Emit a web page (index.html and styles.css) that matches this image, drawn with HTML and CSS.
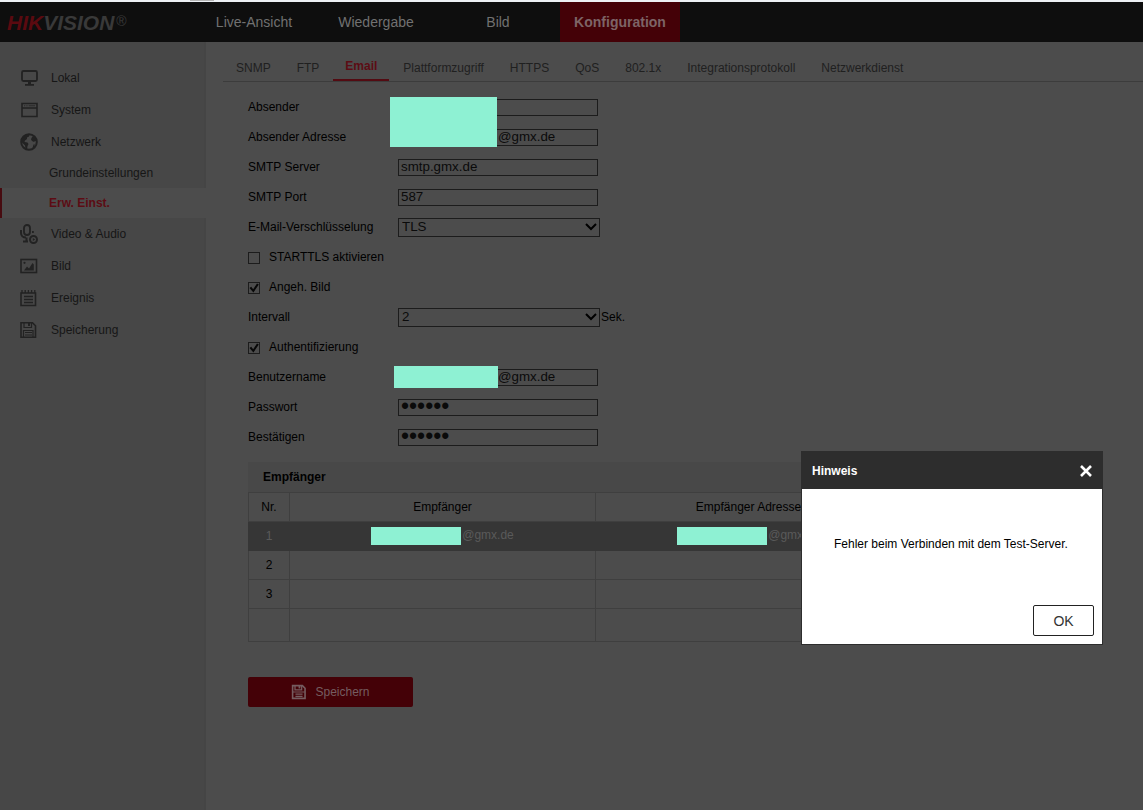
FILE: index.html
```html
<!DOCTYPE html>
<html lang="de">
<head>
<meta charset="utf-8">
<title>Konfiguration</title>
<link rel="stylesheet" href="styles.css">
</head>
<body>
<div class="strip"><span class="strip-tab"></span></div>
<header class="header">
  <div class="logo"><span class="logo-red">HIK</span>VISION<span class="reg">®</span></div>
  <nav class="nav">
    <a href="#">Live-Ansicht</a>
    <a href="#">Wiedergabe</a>
    <a href="#">Bild</a>
    <a href="#" class="active">Konfiguration</a>
  </nav>
</header>
<div class="layout">
  <nav class="sidebar">
    <a href="#" class="item"><svg class="icon" viewBox="0 0 18 18"><rect x="2" y="2" width="15" height="10" rx="1.5" fill="none" stroke="currentColor" stroke-width="1.8"/><path d="M8 12h3v3h3v1.700H5V15h3z" fill="currentColor"/></svg>Lokal</a>
    <a href="#" class="item"><svg class="icon" viewBox="0 0 18 18"><path d="M2 2.500h15v13H2zM2 7h15" fill="none" stroke="currentColor" stroke-width="1.600"/><path d="M4 4.800h1.300M6.300 4.800h1.300M8.600 4.800h6.500" stroke="currentColor" stroke-width=".8"/></svg>System</a>
    <a href="#" class="item"><svg class="icon" viewBox="0 0 18 18"><circle cx="9" cy="9" r="7.800" fill="none" stroke="currentColor" stroke-width="2"/><path d="M2 6C3 3 6 1 9.500 1.500L9 3.500 7 4.500 7 6 5 7.500 4.500 9 7.500 9.500 8.500 11 7.500 13 7 16.500 5.500 15.500 5 12.500 2 9.500zM12.500 3.500L15 4l2 4h-2l-1 1-2-1-1-1.500.5-1.500zM13.500 11.500l1.500 0-1 2.500-1.500 1z" fill="currentColor"/></svg>Netzwerk</a>
    <a href="#" class="sub">Grundeinstellungen</a>
    <a href="#" class="sub current">Erw. Einst.</a>
    <a href="#" class="item"><svg class="icon tall" viewBox="0 0 18 20"><rect x="4" y="1" width="6" height="10" rx="3" fill="none" stroke="currentColor" stroke-width="1.800"/><path d="M1 6v3c0 2.500 2 4.500 5 4.500M6.500 13.500v4M3 17.500h5M12 8h1.800" fill="none" stroke="currentColor" stroke-width="2"/><circle cx="13.500" cy="15.500" r="3.500" fill="none" stroke="currentColor" stroke-width="2"/><path d="M12.800 13.900l2.400 1.600-2.400 1.600z" fill="currentColor"/></svg>Video &amp; Audio</a>
    <a href="#" class="item"><svg class="icon" viewBox="0 0 18 18"><rect x="1" y="2.500" width="15.500" height="13" fill="none" stroke="currentColor" stroke-width="1.600"/><circle cx="4.500" cy="5.800" r="1.100" fill="currentColor"/><path d="M4 13.500l3-4 2 2 3.500-5.500 1.300 1.500v6z" fill="currentColor"/></svg>Bild</a>
    <a href="#" class="item"><svg class="icon" viewBox="0 0 18 18"><path d="M1 4h14.500v12.500H1z" fill="none" stroke="currentColor" stroke-width="1.600"/><path d="M2 1v3M5.200 1v3M8.400 1v3M11.600 1v3M14.800 1v3M4 7.500h9M4 10.500h9M4 13.500h9" fill="none" stroke="currentColor" stroke-width="1.300"/></svg>Ereignis</a>
    <a href="#" class="item"><svg class="icon" viewBox="0 0 18 18"><path d="M1 1.800h11.500l3 3v11.400H1z" fill="none" stroke="currentColor" stroke-width="1.600"/><path d="M4 2v4.500h7.500V2M3.500 16V9.500H13V16M5 11.500h7M5 14h7" fill="none" stroke="currentColor" stroke-width="1.200"/><path d="M8 2h2v3H8z" fill="currentColor"/></svg>Speicherung</a>
  </nav>
  <main class="content">
    <nav class="tabs">
      <a href="#">SNMP</a><a href="#">FTP</a><a href="#" class="active">Email</a><a href="#">Plattformzugriff</a><a href="#">HTTPS</a><a href="#">QoS</a><a href="#">802.1x</a><a href="#">Integrationsprotokoll</a><a href="#">Netzwerkdienst</a>
    </nav>
    <form class="form">
      <div class="row"><label for="sender">Absender</label><input type="text" id="sender"><span class="mask mask-sender"></span></div>
      <div class="row"><label for="address">Absender Adresse</label><input type="text" id="address" class="partial" value="@gmx.de"></div>
      <div class="row"><label for="server">SMTP Server</label><input type="text" id="server" value="smtp.gmx.de"></div>
      <div class="row"><label for="port">SMTP Port</label><input type="text" id="port" value="587"></div>
      <div class="row"><label for="enc">E-Mail-Verschlüsselung</label><span class="select"><select id="enc"><option>TLS</option></select><svg class="chevron" viewBox="0 0 12 8"><path d="M1 1l5 5 5-5" fill="none" stroke="currentColor" stroke-width="2"/></svg></span></div>
      <div class="row check"><input type="checkbox" id="starttls"><label for="starttls">STARTTLS aktivieren</label></div>
      <div class="row check"><input type="checkbox" id="image" checked><label for="image">Angeh. Bild</label></div>
      <div class="row"><label for="interval">Intervall</label><span class="select"><select id="interval"><option>2</option></select><svg class="chevron" viewBox="0 0 12 8"><path d="M1 1l5 5 5-5" fill="none" stroke="currentColor" stroke-width="2"/></svg></span><span class="unit">Sek.</span></div>
      <div class="row check"><input type="checkbox" id="auth" checked><label for="auth">Authentifizierung</label></div>
      <div class="row"><label for="user">Benutzername</label><input type="text" id="user" class="partial" value="@gmx.de"><span class="mask mask-user"></span></div>
      <div class="row"><label for="pass">Passwort</label><input type="password" id="pass" value="123456"></div>
      <div class="row"><label for="confirm">Bestätigen</label><input type="password" id="confirm" value="123456"></div>
      <section class="recipients">
        <h2>Empfänger</h2>
        <table>
          <colgroup><col class="col-nr"><col><col></colgroup>
          <thead><tr><th>Nr.</th><th>Empfänger</th><th>Empfänger Adresse</th></tr></thead>
          <tbody>
            <tr class="selected"><td>1</td><td><span class="hidden-name"></span>@gmx.de</td><td><span class="hidden-name"></span>@gmx.de</td></tr>
            <tr><td>2</td><td></td><td></td></tr>
            <tr><td>3</td><td></td><td></td></tr>
            <tr class="last"><td></td><td></td><td></td></tr>
          </tbody>
        </table>
      </section>
      <button type="button" class="save"><svg class="save-icon" viewBox="0 0 18 18"><path d="M1.800 1.800h11l3 3v11.400h-14z" fill="none" stroke="currentColor" stroke-width="1.800"/><path d="M4.500 2v4.500h7.500V2M2 9h13.500M5 11.500h8M5 14h8" fill="none" stroke="currentColor" stroke-width="1.400"/><path d="M8.500 2h2v3h-2z" fill="currentColor"/></svg>Speichern</button>
    </form>
  </main>
</div>
<div class="dialog" role="dialog" aria-labelledby="dialog-title">
  <div class="dialog-head"><h2 id="dialog-title">Hinweis</h2><button type="button" class="close" aria-label="Schließen"><svg viewBox="0 0 12 12"><path d="M1 1l10 10M11 1L1 11" stroke="currentColor" stroke-width="2.600"/></svg></button></div>
  <p class="message">Fehler beim Verbinden mit dem Test-Server.</p>
  <div class="actions"><button type="button" class="ok">OK</button></div>
</div>
</body>
</html>
```
FILE: styles.css
```css
* { box-sizing: border-box; }
body {
  margin: 0;
  min-height: 100vh;
  display: flex;
  flex-direction: column;
  background: #4c4c4c;
  color: #000;
  font-family: "Liberation Sans", Arial, sans-serif;
  font-size: 12px;
}
a { color: inherit; text-decoration: none; }
button, input, select { font-family: inherit; }
h2, p { margin: 0; font-size: 12px; }

.strip { height: 2px; background: #edf0f4; display: flex; padding-left: 190px; }
.strip-tab { width: 24px; height: 1px; background: #b4b4b4; }

.header { height: 40px; background: #0e0e0e; display: flex; align-items: center; }
.logo {
  width: 194px;
  padding-left: 7px;
  font-size: 21px;
  font-weight: bold;
  font-style: italic;
  line-height: 38px;
  color: #393939;
}
.logo-red { color: #5b0a10; }
.reg { font-size: 14px; font-weight: normal; font-style: normal; vertical-align: 4px; margin-left: 2px; }
.nav { display: flex; gap: 2px; font-size: 14px; color: #717171; }
.nav a { width: 120px; line-height: 40px; text-align: center; }
.nav .active { background: #440107; color: #7d6466; font-weight: bold; }

.layout { flex: 1; display: flex; }
.sidebar {
  width: 206px;
  padding-top: 20px;
  background: #474747;
  border-right: 2px solid #454545;
  color: #161616;
  display: flex;
  flex-direction: column;
}
.item { height: 32px; padding-left: 20px; display: flex; align-items: center; gap: 13px; }
.icon { width: 18px; height: 18px; color: #222; }
.tall { height: 20px; }
.sub { line-height: 30px; padding-left: 49px; }
.current {
  background: #4c4c4c;
  border-left: 2px solid #470b10;
  padding-left: 47px;
  margin-right: -2px;
  color: #5c0c14;
  font-weight: bold;
}

.content { flex: 1; padding-left: 17px; }
.tabs { height: 40px; padding: 10px 0 0 1px; display: flex; gap: 2px; border-bottom: 1px solid #3c3c3c; color: #202020; }
.tabs a { padding: 0 12px; line-height: 32px; }
.tabs .active {
  line-height: 28px;
  color: #5c0c14;
  font-weight: bold;
  border-bottom: 2px solid #530b12;
}

.form { padding: 10px 0 0 25px; }
.row { height: 30px; display: flex; align-items: center; position: relative; }
.row label { width: 150px; }
.row.check label { width: auto; margin-left: 9px; }
.row input[type="text"], .row input[type="password"] {
  width: 200px;
  height: 17px;
  padding: 0 2px 1px;
  border: 1px solid #1c1c1c;
  background: transparent;
  color: #0a0a0a;
}
.row input[type="password"] { font-size: 23px; }
.row input.partial { padding-left: 99px; }
.select { width: 202px; height: 19px; position: relative; display: flex; }
select {
  width: 100%;
  appearance: none;
  border: 1px solid #1c1c1c;
  border-radius: 0;
  padding: 0 3px 1px;
  background: transparent;
  color: #0a0a0a;
}
.chevron { position: absolute; right: 3px; top: 5px; width: 12px; height: 8px; pointer-events: none; }
.unit { margin-left: 1px; }
input[type="checkbox"] {
  appearance: none;
  width: 12px;
  height: 12px;
  margin: 2px 0 0;
  border: 1px solid #1c1c1c;
}
input[type="checkbox"]:checked::before {
  content: "";
  display: block;
  width: 10px;
  height: 10px;
  background: #080808;
  clip-path: polygon(5% 50%, 22% 38%, 42% 62%, 80% 5%, 98% 15%, 44% 95%);
}
.mask { position: absolute; z-index: 1; background: #8ef1d3; }
.mask-sender { left: 142px; top: 5px; width: 107px; height: 50px; }
.mask-user { left: 146px; top: 4px; width: 104px; height: 22px; }

.recipients { width: 654px; max-width: 100%; margin-top: 10px; }
.recipients h2 { background: #484848; line-height: 30px; padding-left: 15px; }
table { width: 100%; table-layout: fixed; border-collapse: collapse; }
.col-nr { width: 41px; }
th, td { height: 29px; padding: 0; border: 1px solid #3f3f3f; text-align: center; font-weight: normal; }
.selected td { background: #363636; color: #5a5a5a; border-color: #363636; }
.last td { height: 33px; }
.hidden-name { display: inline-block; width: 90px; height: 18px; margin-right: 1px; vertical-align: middle; background: #8ef1d3; }

.save {
  display: flex;
  align-items: center;
  justify-content: center;
  gap: 8px;
  width: 165px;
  height: 30px;
  margin-top: 35px;
  border: 0;
  border-radius: 2px;
  background: #440107;
  color: #755d60;
  font-size: 12px;
}
.save-icon { width: 16px; height: 16px; }

.dialog {
  position: absolute;
  right: 40px;
  top: 451px;
  width: 302px;
  background: #fff;
  border: 1px solid #2d2d2d;
  z-index: 2;
}
.dialog-head { height: 37px; padding: 0 10px; background: #2d2d2d; color: #fff; display: flex; align-items: center; justify-content: space-between; }
.close { width: 12px; height: 12px; padding: 0; border: 0; background: none; color: #fff; display: flex; }
.message { padding: 47px 0 53px 32px; line-height: 16px; }
.actions { display: flex; justify-content: flex-end; padding: 0 8px 8px; }
.ok { width: 61px; height: 31px; border: 1px solid #222; border-radius: 2px; background: #fff; color: #333; font-size: 14px; }
```
